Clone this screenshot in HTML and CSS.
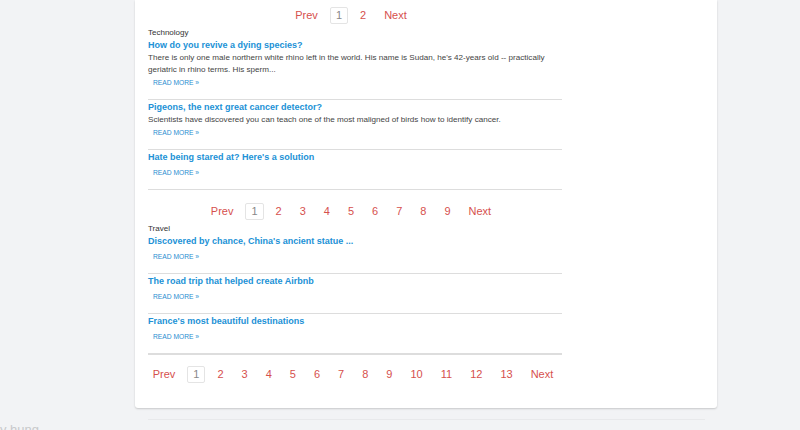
FILE: index.html
```html
<!DOCTYPE html>
<html lang="en">
<head>
    <meta charset="UTF-8">
    <meta name="viewport" content="width=device-width, initial-scale=1.0">
    <title>News</title>
    <link rel="stylesheet" href="styles.css">
</head>
<body>
    <div class="page">
        <div class="card">
            <div class="column">
                <div class="pager first">
                    <a class="pg">Prev</a>
                    <a class="pg active">1</a>
                    <a class="pg">2</a>
                    <a class="pg">Next</a>
                </div>

                <div class="category">Technology</div>
                <div class="article">
                    <a class="title">How do you revive a dying species?</a>
                    <p class="excerpt">There is only one male northern white rhino left in the world. His name is Sudan, he's 42-years old -- practically geriatric in rhino terms. His sperm...</p>
                    <a class="more">READ MORE &raquo;</a>
                </div>
                <div class="article">
                    <a class="title">Pigeons, the next great cancer detector?</a>
                    <p class="excerpt">Scientists have discovered you can teach one of the most maligned of birds how to identify cancer.</p>
                    <a class="more">READ MORE &raquo;</a>
                </div>
                <div class="article">
                    <a class="title">Hate being stared at? Here's a solution</a>
                    <a class="more">READ MORE &raquo;</a>
                </div>

                <div class="pager">
                    <a class="pg">Prev</a>
                    <a class="pg active">1</a>
                    <a class="pg">2</a>
                    <a class="pg">3</a>
                    <a class="pg">4</a>
                    <a class="pg">5</a>
                    <a class="pg">6</a>
                    <a class="pg">7</a>
                    <a class="pg">8</a>
                    <a class="pg">9</a>
                    <a class="pg">Next</a>
                </div>

                <div class="category">Travel</div>
                <div class="article">
                    <a class="title">Discovered by chance, China's ancient statue ...</a>
                    <a class="more">READ MORE &raquo;</a>
                </div>
                <div class="article">
                    <a class="title">The road trip that helped create Airbnb</a>
                    <a class="more">READ MORE &raquo;</a>
                </div>
                <div class="article last">
                    <a class="title">France's most beautiful destinations</a>
                    <a class="more">READ MORE &raquo;</a>
                </div>

                <div class="pager bottom">
                    <a class="pg">Prev</a>
                    <a class="pg active">1</a>
                    <a class="pg">2</a>
                    <a class="pg">3</a>
                    <a class="pg">4</a>
                    <a class="pg">5</a>
                    <a class="pg">6</a>
                    <a class="pg">7</a>
                    <a class="pg">8</a>
                    <a class="pg">9</a>
                    <a class="pg">10</a>
                    <a class="pg">11</a>
                    <a class="pg">12</a>
                    <a class="pg">13</a>
                    <a class="pg">Next</a>
                </div>
            </div>
        </div>
        <div class="footer-line"></div>
    </div>
    <div class="footer-text">y hung</div>
</body>
</html>
```

FILE: styles.css
```css
body{
    margin: 0;
    background: #f2f3f5;
    font-family: "Liberation Sans", Arial, sans-serif;
    color: #333;
}
.page{
    padding-left: 135px;
}
.card{
    width: 582px;
    background: #fff;
    border-radius: 0 0 3px 3px;
    box-shadow: 0 1px 2px rgba(0,0,0,.18);
    padding: 7px 0 25px 13px;
    box-sizing: border-box;
}
.column{
    width: 414px;
}
.pager{
    display: flex;
    justify-content: center;
    gap: 6px;
    margin: 13px 0 4px;
    padding-right: 8px;
}
.pager.first{
    margin-top: 0;
}
.pager.bottom{
    margin: 11px 0 0;
    padding-right: 4px;
}
.pg{
    font-size: 11px;
    line-height: 15px;
    padding: 0 5px;
    border: 1px solid transparent;
    border-radius: 2px;
    color: #d6504d;
}
.pg.active{
    color: #888;
    border-color: #e4e4e4;
}
.category{
    font-size: 8px;
    line-height: 10px;
    color: #333;
}
.article{
    border-bottom: 1px solid #ddd;
    padding-bottom: 10px;
}
.article.last{
    border-bottom: 2px solid #ddd;
}
.title{
    display: block;
    font-size: 9px;
    line-height: 14px;
    font-weight: bold;
    color: #2191d6;
}
.excerpt{
    margin: 0 0 -2px;
    font-size: 8.1px;
    line-height: 12px;
    color: #444;
}
.more{
    display: block;
    margin: 3px 0 0 5px;
    font-size: 6.7px;
    line-height: 12px;
    color: #2a8ed0;
}
.footer-line{
    width: 557px;
    margin: 11px 0 0 13px;
    border-top: 1px solid #e8e9eb;
}
.footer-text{
    margin-top: 2px;
    font-size: 13px;
    color: #c8c9cb;
}
```
